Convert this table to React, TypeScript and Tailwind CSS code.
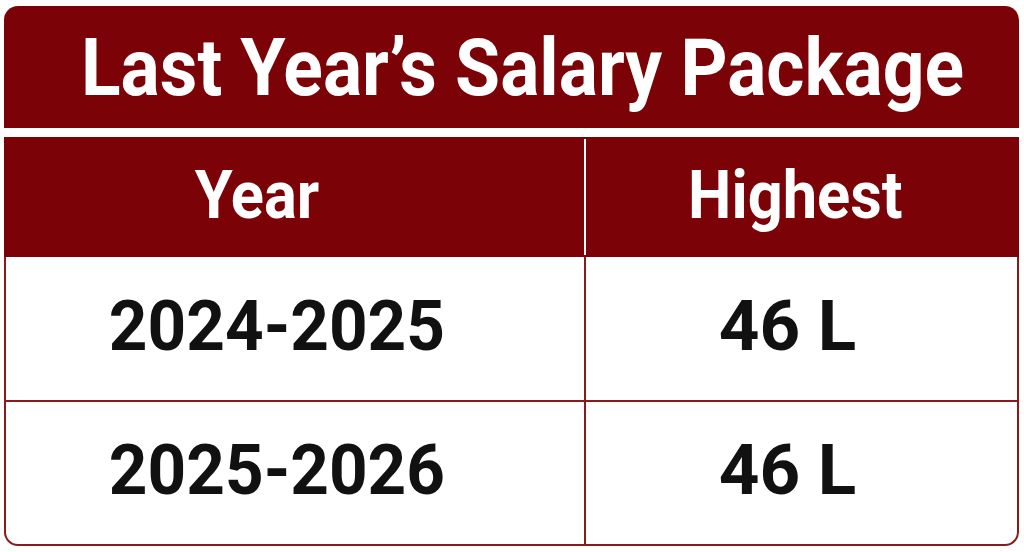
const red = "bg-[#7b0307]"

const rows = [
  { year: "2024-2025", highest: "46 L" },
  { year: "2025-2026", highest: "46 L" },
]

export default function App() {
  return (
    <div
      className="w-[1024px] h-[552px] bg-white pt-[6px] pl-[4px] pr-[5px] pb-[6px] flex flex-col"
      style={{ fontFamily: "Roboto, 'Liberation Sans', sans-serif" }}
    >
      {/* Title */}
      <div className={`${red} h-[122px] rounded-t-[14px] flex items-center justify-center pl-[22px] shrink-0`}>
        <h1 className="text-white font-bold text-[80px] leading-none whitespace-nowrap scale-x-[0.915] pt-[2px]">
          Last Year’s Salary Package
        </h1>
      </div>

      <div className="h-[9px] shrink-0" />

      {/* Header */}
      <div className={`${red} h-[120px] grid grid-cols-[580px_2px_1fr] shrink-0`}>
        <div className="flex items-center justify-center pr-[74px] pb-[2px]">
          <span className="text-white font-bold text-[66px] leading-none scale-x-[0.93]">Year</span>
        </div>
        <div className="bg-white my-[2px]" />
        <div className="flex items-center justify-center pr-[14px] pb-[2px]">
          <span className="text-white font-bold text-[66px] leading-none scale-x-[0.93]">Highest</span>
        </div>
      </div>

      {/* Body */}
      <div className="flex-1 flex flex-col border-2 border-t-0 border-[#8a1a1c] rounded-b-[14px]">
        {rows.map((r, i) => (
          <div
            key={r.year}
            className={`grid grid-cols-[578px_2px_1fr] flex-1 ${i === 0 ? "border-b-2 border-[#8a1a1c]" : ""}`}
          >
            <div className="flex items-center justify-center pr-[36px] pb-[6px]">
              <span className="text-[#111] font-bold text-[71px] leading-none scale-x-[0.95]">{r.year}</span>
            </div>
            <div className="bg-[#8a1a1c]" />
            <div className="flex items-center justify-center pr-[28px] pb-[6px]">
              <span className="text-[#111] font-bold text-[71px] leading-none">{r.highest}</span>
            </div>
          </div>
        ))}
      </div>
    </div>
  )
}
